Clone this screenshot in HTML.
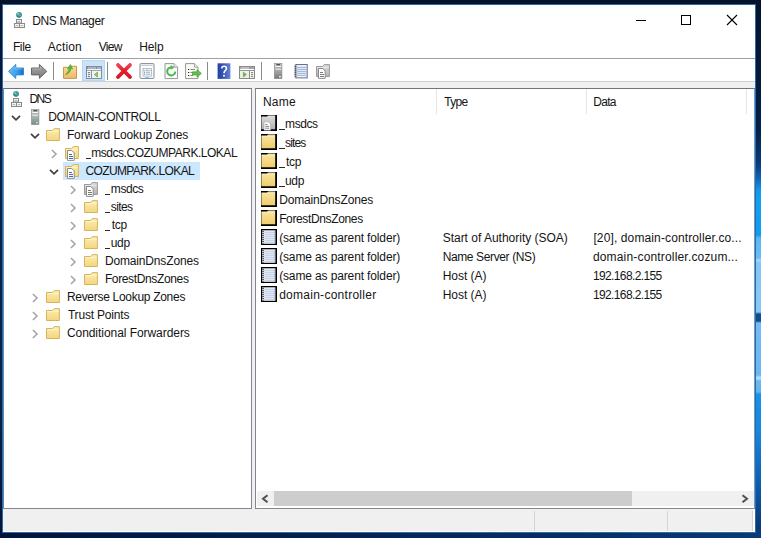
<!DOCTYPE html>
<html><head><meta charset="utf-8">
<style>
*{box-sizing:border-box;margin:0;padding:0}
html,body{width:761px;height:538px;overflow:hidden;background:#04193c;font-family:"Liberation Sans",sans-serif;font-size:12px;color:#000}
.a{position:absolute}
.t{position:absolute;white-space:nowrap;line-height:14px;font-size:12px;color:#141414}
svg{position:absolute;overflow:visible}
</style></head><body>
<!-- desktop wallpaper strips -->
<div class="a" style="left:0;top:0;width:761px;height:6px;background:#03132c"></div>
<div class="a" style="left:0;top:0;width:3px;height:538px;background:linear-gradient(#03132c 0,#04234a 120px,#04234a 400px,#03163a 538px)"></div>
<div class="a" style="left:0;top:532px;width:761px;height:6px;background:linear-gradient(to right,#03153a 0,#04204c 300px,#0a3a78 761px)"></div>
<div class="a" style="left:755px;top:0;width:6px;height:538px;background:linear-gradient(#03132c 0px,#04204a 130px,#0a3d7c 165px,#0f63b5 178px,#1497e8 190px,#10a0f2 200px,#0e9cf0 235px,#5ab8f4 238px,#6abdf4 258px,#a5d8f8 260px,#84c6f5 263px,#8cc8f4 312px,#0e4f8e 314px,#0e4f8e 321px,#74bcf1 323px,#6ab8f0 375px,#c0e2f8 378px,#6ab8f0 381px,#62b4ee 392px,#1a90e8 394px,#1488e0 430px,#1278d0 450px,#0d5cae 485px,#0a3a78 525px,#0a3a78 538px)"></div>
<!-- window -->
<div class="a" style="left:2px;top:4px;width:754px;height:529px;background:#2f6aa5"></div>
<div class="a" style="left:3px;top:5px;width:752px;height:527px;background:#fff"></div>
<!-- menu bottom line -->
<div class="a" style="left:3px;top:58px;width:752px;height:1px;background:#a0a0a0"></div>
<!-- toolbar bottom -->
<div class="a" style="left:3px;top:81px;width:752px;height:7px;background:#f0f0f0;border-top:1px solid #d0d0d0"></div>
<!-- main area bg -->
<div class="a" style="left:3px;top:88px;width:750px;height:421px;background:#f0f0f0"></div>
<!-- left pane -->
<div class="a" style="left:3px;top:88px;width:249px;height:421px;background:#fff;border:1px solid #828790;border-top-color:#747474;border-left-color:#5a8ab5"></div>
<!-- right pane -->
<div class="a" style="left:255px;top:88px;width:500px;height:421px;background:#fff;border:1px solid #828790;border-top-color:#747474;border-right-color:#6a9ccc"></div>
<!-- status bar -->
<div class="a" style="left:3px;top:509px;width:750px;height:22px;background:#f0f0f0"></div>
<div class="a" style="left:534px;top:511px;width:1px;height:20px;background:#d4d4d4"></div>
<div class="a" style="left:667px;top:511px;width:1px;height:20px;background:#d4d4d4"></div>
<div class="a" style="left:752px;top:511px;width:1px;height:20px;background:#d4d4d4"></div>
<!-- header separators -->
<div class="a" style="left:436px;top:89px;width:1px;height:25px;background:#e5e5e5"></div>
<div class="a" style="left:586px;top:89px;width:1px;height:25px;background:#e5e5e5"></div>
<div class="a" style="left:746px;top:89px;width:1px;height:25px;background:#e5e5e5"></div>
<!-- h scrollbar -->
<div class="a" style="left:257px;top:491px;width:497px;height:15px;background:#f0f0f0"></div>
<div class="a" style="left:274px;top:491px;width:358px;height:15px;background:#cdcdcd"></div>
<svg style="left:257px;top:491px" width="17" height="15"><path d="M10.5 4.2 L6 7.7 L10.5 11.2" fill="none" stroke="#505050" stroke-width="2"/></svg>
<svg style="left:737px;top:491px" width="17" height="15"><path d="M5.5 4.2 L10 7.7 L5.5 11.2" fill="none" stroke="#505050" stroke-width="2"/></svg>
<!-- selection -->
<div class="a" style="left:63px;top:162px;width:137px;height:18px;background:#cce8ff"></div>
<!-- toolbar highlight -->
<div class="a" style="left:82px;top:60px;width:23px;height:21px;background:#cce4f7;border:1px solid #b4d8f5"></div>
<!-- toolbar separators -->
<div class="a" style="left:53px;top:62px;width:1px;height:18px;background:#8a8a8a"></div><div class="a" style="left:107px;top:62px;width:1px;height:18px;background:#8a8a8a"></div><div class="a" style="left:207px;top:62px;width:1px;height:18px;background:#8a8a8a"></div><div class="a" style="left:261px;top:62px;width:1px;height:18px;background:#8a8a8a"></div>
<!-- window controls -->
<div class="a" style="left:636px;top:20px;width:10px;height:1px;background:#000"></div>
<div class="a" style="left:681px;top:15px;width:10px;height:10px;border:1px solid #000"></div>
<svg style="left:727px;top:15px" width="10" height="10"><path d="M0 0 L10 10 M10 0 L0 10" stroke="#000" stroke-width="1.1" fill="none"/></svg>
<svg width="0" height="0" style="position:absolute"><defs>
<linearGradient id="gF" x1="0" y1="0" x2="0" y2="1"><stop offset="0" stop-color="#fcedb4"/><stop offset="1" stop-color="#f3d680"/></linearGradient>
<linearGradient id="gFU" x1="0" y1="0" x2="0" y2="1"><stop offset="0" stop-color="#f8dc98"/><stop offset="1" stop-color="#eeb868"/></linearGradient>
<linearGradient id="gFL" x1="0" y1="0" x2="0" y2="1"><stop offset="0" stop-color="#f9e6a4"/><stop offset="1" stop-color="#f0cd6c"/></linearGradient>
<linearGradient id="gG" x1="0" y1="0" x2="0" y2="1"><stop offset="0" stop-color="#dcdcdc"/><stop offset="1" stop-color="#b4b4b4"/></linearGradient>
<linearGradient id="gS" x1="0" y1="0" x2="0" y2="1"><stop offset="0" stop-color="#d6dcda"/><stop offset="0.4" stop-color="#b2bcb8"/><stop offset="1" stop-color="#7a8884"/></linearGradient>
<linearGradient id="gS2" x1="0" y1="0" x2="0" y2="1"><stop offset="0" stop-color="#d8d8d8"/><stop offset="0.4" stop-color="#b0b0b0"/><stop offset="1" stop-color="#787878"/></linearGradient>
<linearGradient id="gB" x1="0" y1="0" x2="1" y2="0"><stop offset="0" stop-color="#5cbcf4"/><stop offset="0.55" stop-color="#3aa0ea"/><stop offset="1" stop-color="#1a6cc4"/></linearGradient>
<linearGradient id="gA" x1="0" y1="0" x2="0" y2="1"><stop offset="0" stop-color="#a6a6a6"/><stop offset="1" stop-color="#7e7e7e"/></linearGradient>
<linearGradient id="gH" x1="0" y1="0" x2="1" y2="0"><stop offset="0" stop-color="#2440a0"/><stop offset="0.5" stop-color="#3a58b8"/><stop offset="1" stop-color="#6a84d4"/></linearGradient>
<linearGradient id="gR" x1="0" y1="0" x2="0" y2="1"><stop offset="0" stop-color="#f06a70"/><stop offset="0.5" stop-color="#e01828"/><stop offset="1" stop-color="#c81020"/></linearGradient>
<radialGradient id="gT" cx="0.4" cy="0.35" r="0.7"><stop offset="0" stop-color="#6cbcc0"/><stop offset="1" stop-color="#0f6c70"/></radialGradient>

<g id="folder"><path d="M1.5 3.5H7.6L9.2 1.6H14.4V13.5H1.5Z" fill="url(#gF)" stroke="#d6b55a"/><path d="M2.2 4.6H13.8" stroke="#fdf4cf" stroke-width="0.9"/></g>
<g id="gfolder"><path d="M1.5 3.5H7.6L9.2 1.6H14.4V13.5H1.5Z" fill="url(#gG)" stroke="#9a9a9a"/><path d="M2.2 4.6H13.8" stroke="#ececec" stroke-width="0.9"/></g>
<g id="doc"><path d="M3.5 5.5H7.8L10.2 7.9V15.4H3.5Z" fill="#fff" stroke="#8c8c8c"/><path d="M5 9.5H8M5 11.5H9M5 13.5H9" stroke="#34589c" stroke-width="0.9"/></g>
<g id="gdoc"><path d="M3.5 5.5H7.8L10.2 7.9V15.4H3.5Z" fill="#fff" stroke="#8c8c8c"/><path d="M5 9.5H8M5 11.5H9M5 13.5H9" stroke="#777" stroke-width="1"/></g>
<g id="zone"><use href="#folder"/><use href="#doc"/></g>
<g id="gzone"><use href="#gfolder"/><use href="#gdoc"/></g>
<g id="server"><rect x="4.4" y="0.4" width="7.5" height="15.2" fill="url(#gS)" stroke="#8a9692" stroke-width="0.7"/><path d="M6.3 1.8H10.3" stroke="#1c1c1c" stroke-width="1"/><path d="M5.4 3.5H11" stroke="#fafafa" stroke-width="1.1"/><path d="M5.4 6.1H11" stroke="#f4f4f4" stroke-width="1.1"/><path d="M5.4 4.8H11" stroke="#98a4a0" stroke-width="0.8"/><rect x="9" y="13" width="1.8" height="1.4" fill="#b8eaa8"/></g>
<g id="tserver"><rect x="4.4" y="0.4" width="7.5" height="15.2" fill="url(#gS2)" stroke="#8c8c8c" stroke-width="0.7"/><path d="M6.3 1.8H10.3" stroke="#1c1c1c" stroke-width="1"/><path d="M5.4 3.5H11" stroke="#fafafa" stroke-width="1.1"/><path d="M5.4 6.1H11" stroke="#f4f4f4" stroke-width="1.1"/><path d="M5.4 4.8H11" stroke="#a0a0a0" stroke-width="0.8"/><rect x="9" y="13" width="1.8" height="1.4" fill="#f0f0f0"/></g>
<g id="dns"><circle cx="6" cy="2.8" r="2.9" fill="url(#gT)"/><path d="M4.8 1.5L5.6 2.5M7 3.3L7.5 4.3" stroke="#d8f4ee" stroke-width="0.9" opacity="0.85"/>
<rect x="3.5" y="7.5" width="5" height="3.5" fill="#f6f6f6" stroke="#8a8a8a" stroke-width="1"/>
<rect x="1.5" y="11.5" width="5" height="4" fill="#f6f6f6" stroke="#8a8a8a" stroke-width="1"/>
<rect x="6.5" y="11.5" width="5" height="4" fill="#f6f6f6" stroke="#8a8a8a" stroke-width="1"/>
<path d="M4.7 9.4H7.3M2.7 13.6H5.3M7.7 13.6H10.3" stroke="#a8a8a8" stroke-width="0.9"/></g>
<g id="chevD"><path d="M-4 -2.2L0 1.9L4 -2.2" fill="none" stroke="#404040" stroke-width="1.7"/></g>
<g id="chevR"><path d="M-2.1 -4L2 0L-2.1 4" fill="none" stroke="#a6a6a6" stroke-width="1.6"/></g>
<g id="note"><rect x="2.8" y="1.5" width="11.4" height="13.4" fill="#eef3fd" stroke="#56627e" stroke-width="0.9"/><path d="M4 4.3H13.4M4 6.3H13.4M4 8.3H13.4M4 10.3H13.4M4 12.3H13.4" stroke="#8fa6cc" stroke-width="0.9"/><path d="M1.3 3.2H3.4M1.3 5.2H3.4M1.3 7.2H3.4M1.3 9.2H3.4M1.3 11.2H3.4M1.3 13.2H3.4" stroke="#4a4a4a" stroke-width="1"/></g>
<g id="rec"><rect x="0" y="0" width="16" height="16" fill="#000"/><rect x="1.1" y="1.3" width="13.2" height="13.5" fill="#f6f9ff"/><path d="M3.6 3.2H14M3.6 5.2H14M3.6 7.2H14M3.6 9.2H14M3.6 11.2H14M3.6 13.2H14" stroke="#9db2d4" stroke-width="0.75"/><path d="M1.1 2.4H3.1M1.1 4.4H3.1M1.1 6.4H3.1M1.1 8.4H3.1M1.1 10.4H3.1M1.1 12.4H3.1M1.1 14.2H3.1" stroke="#5a5a5a" stroke-width="1.1"/><path d="M14 1.5V14.6" stroke="#8c9cc0" stroke-width="0.7"/></g>
<g id="lfolder"><rect x="0" y="0" width="16" height="16" fill="#000"/><path d="M0.4 1.6H6L7.3 0.5H14.2V14.2H0.4Z" fill="url(#gFL)"/><path d="M6.5 1.4H13.5" stroke="#e8d9a0" stroke-width="0.8"/><path d="M0.8 2.6H13.8" stroke="#fdf4cf" stroke-width="0.8" opacity="0.6"/></g>
<g id="lgzone"><rect x="0" y="0" width="16" height="16" fill="#000"/><path d="M0.4 1.6H6L7.3 0.5H14.2V14.2H0.4Z" fill="url(#gG)"/><path d="M6.5 1.4H13.5" stroke="#e4e4e4" stroke-width="0.8"/><path d="M3 6.8H7.4L9.6 9V15.2H3Z" fill="#fff" stroke="#a0a0a0" stroke-width="0.6"/><path d="M4.2 9.6H6.4M4.2 11.4H8.2M4.2 13.2H8.2" stroke="#7a7a7a" stroke-width="0.9"/></g>
</defs></svg>
<svg style="left:8px;top:63px" width="16" height="16"><path d="M0.6 8.4L7.8 1.4V5H15.5V11.9H7.8V15.4Z" fill="url(#gB)" stroke="#2b84d4" stroke-width="0.9" stroke-linejoin="round"/><path d="M2.2 8.2L7 3.6V6H14.5" fill="none" stroke="#9bd6f8" stroke-width="0.8" opacity="0.8"/></svg>
<svg style="left:31px;top:63px" width="16" height="16"><path d="M15.8 8.4L8.4 1.4V5H0.5V11.9H8.4V15.4Z" fill="url(#gA)" stroke="#5c5c5c" stroke-width="0.9" stroke-linejoin="round"/><path d="M1.4 6H9.3V3.6" fill="none" stroke="#c4c4c4" stroke-width="0.8" opacity="0.8"/></svg>
<svg style="left:62px;top:63px" width="16" height="16"><path d="M1.5 4.3H7L8.5 3.3H14.5V15.4H1.5Z" fill="url(#gFU)" stroke="#c49a50"/><path d="M3.6 11.6C5.5 10 6.5 8 7.3 5.6L5.6 5.8L8.4 1.6L10.6 6L8.9 5.4C8.6 8.5 6.5 10.8 3.6 11.6Z" fill="#58c040" stroke="#389a2c" stroke-width="0.6"/></svg>
<svg style="left:86px;top:63px" width="16" height="16"><rect x="0.5" y="3.5" width="15" height="12" fill="#fff" stroke="#78829a" stroke-width="0.9"/><rect x="1" y="4" width="14" height="2" fill="#8690a6"/><path d="M2 5H10" stroke="#e4e8ee" stroke-width="0.8"/><rect x="11.5" y="4.4" width="1.2" height="1.2" fill="#e4e8ee"/><rect x="13.3" y="4.4" width="1.2" height="1.2" fill="#e4e8ee"/><path d="M0.5 7.4H15.5" stroke="#78829a" stroke-width="0.8"/><path d="M5.5 7.5V15.5" stroke="#78829a" stroke-width="0.9"/><rect x="1.8" y="9" width="2.4" height="1.2" fill="#78829a"/><rect x="1.8" y="11" width="2.4" height="1.2" fill="#78829a"/><rect x="1.8" y="13" width="2.4" height="1.2" fill="#78829a"/><rect x="6.2" y="8.2" width="8.8" height="6.8" fill="#eef6e8"/><path d="M11.4 9.2L8.4 11.6L11.4 14Z" fill="#9ccc88" stroke="#5c9a48" stroke-width="0.7"/></svg>
<svg style="left:116px;top:63px" width="16" height="16"><path d="M2 2L14 14M14 2L2 14" stroke="url(#gR)" stroke-width="3.6" stroke-linecap="round"/><path d="M2 2L14 14M14 2L2 14" stroke="#e8202e" stroke-width="3.6" stroke-linecap="round" opacity="0.55"/></svg>
<svg style="left:138.5px;top:63px" width="16" height="16"><rect x="1" y="0.6" width="14" height="14.8" rx="1" fill="#fdfdfd" stroke="#848c94" stroke-width="1"/><path d="M2.2 2.4H13.8" stroke="#c4ccd4" stroke-width="1.2"/><rect x="4" y="5.5" width="8.4" height="7.6" fill="#fff" stroke="#a8b2be" stroke-width="0.8"/><path d="M4 7.4H12.4M8.2 5.5V7.4" stroke="#a8b2be" stroke-width="0.8"/><path d="M5.2 9.2H6.2M5.2 11.2H6.2" stroke="#3c5c8c" stroke-width="1"/><path d="M7.2 9.2H11.2M7.2 11.2H11.2" stroke="#8c9cb4" stroke-width="0.9"/><rect x="6.2" y="14.4" width="3.6" height="1.4" fill="#58a8cc"/></svg>
<svg style="left:162.5px;top:63px" width="16" height="16"><path d="M2 0.6H11L14.6 4.2V15.6H2Z" fill="#fbfbfb" stroke="#8a8a8a" stroke-width="0.9"/><path d="M11 0.6V4.2H14.6" fill="#e8e8e8" stroke="#8a8a8a" stroke-width="0.7"/><path d="M8.2 4.4A4 4 0 1 0 12.2 8.6" fill="none" stroke="#4cb648" stroke-width="2"/><path d="M7.8 2L11.4 4.4L7.8 6.8Z" fill="#4cb648"/></svg>
<svg style="left:185px;top:63px" width="17" height="16"><path d="M0.6 0.6H9.4L13 4.2V15.6H0.6Z" fill="#fbfaf4" stroke="#8a8a8a" stroke-width="0.9"/><path d="M9.4 0.6V4.2H13" fill="#e8e8e8" stroke="#8a8a8a" stroke-width="0.7"/><path d="M3 6.5H4.2M3 9.5H4.2M3 12.5H4.2" stroke="#222" stroke-width="1.2"/><path d="M5.5 6.5H10M5.5 9.5H8M5.5 12.5H8" stroke="#888" stroke-width="1"/><path d="M7.5 8.8H12V6.6L16.4 10.4L12 14.2V12H7.5Z" fill="#5cc04a" stroke="#3a9a30" stroke-width="0.6"/></svg>
<svg style="left:215.5px;top:63px" width="16" height="16"><rect x="1.6" y="0.3" width="12.8" height="15.6" fill="url(#gH)"/><path d="M5.8 5.4C5.8 2.6 10.4 2.6 10.4 5.4C10.4 7.4 8 7.6 8 10.2" fill="none" stroke="#fff" stroke-width="1.6"/><circle cx="8" cy="12.7" r="1" fill="#fff"/></svg>
<svg style="left:239px;top:63px" width="16" height="16"><rect x="0.5" y="3.5" width="15" height="12" fill="#fff" stroke="#8a8a8a"/><rect x="1" y="4" width="14" height="2" fill="#a4a4a4"/><path d="M2 5H10" stroke="#ececec" stroke-width="0.8"/><path d="M0.5 7.5H15.5" stroke="#8a8a8a" stroke-width="0.9"/><path d="M10.5 7.5V15.5" stroke="#8a8a8a"/><rect x="11.9" y="9" width="2.4" height="1.2" fill="#8a8a8a"/><rect x="11.9" y="11" width="2.4" height="1.2" fill="#8a8a8a"/><rect x="11.9" y="13" width="2.4" height="1.2" fill="#8a8a8a"/><rect x="1" y="8.2" width="9" height="6.8" fill="#e8f2de"/><path d="M4.4 9.2L7.4 11.6L4.4 14Z" fill="#78b058" stroke="#5a9040" stroke-width="0.5"/></svg>
<svg style="left:270px;top:63px" width="16" height="16"><use href="#tserver"/></svg>
<svg style="left:293px;top:63.3px" width="16" height="16"><use href="#note"/></svg>
<svg style="left:315px;top:63px" width="16" height="16"><use href="#gzone"/></svg>
<svg style="left:10px;top:91px" width="13" height="16"><use href="#dns"/></svg>
<svg style="left:13px;top:12px" width="13" height="16"><use href="#dns"/></svg>
<svg style="left:15.6px;top:117.9px" width="1" height="1"><use href="#chevD"/></svg>
<svg style="left:26.9px;top:109px" width="16" height="16"><use href="#server"/></svg>
<svg style="left:34.6px;top:135.9px" width="1" height="1"><use href="#chevD"/></svg>
<svg style="left:45.1px;top:127px" width="16" height="16"><use href="#folder"/></svg>
<svg style="left:53.6px;top:153.9px" width="1" height="1"><use href="#chevR"/></svg>
<svg style="left:64.1px;top:145px" width="16" height="16"><use href="#zone"/></svg>
<svg style="left:53.6px;top:171.9px" width="1" height="1"><use href="#chevD"/></svg>
<svg style="left:64.1px;top:163px" width="16" height="16"><use href="#zone"/></svg>
<svg style="left:72.6px;top:189.9px" width="1" height="1"><use href="#chevR"/></svg>
<svg style="left:83.1px;top:181px" width="16" height="16"><use href="#gzone"/></svg>
<svg style="left:72.6px;top:207.9px" width="1" height="1"><use href="#chevR"/></svg>
<svg style="left:83.1px;top:199px" width="16" height="16"><use href="#folder"/></svg>
<svg style="left:72.6px;top:225.9px" width="1" height="1"><use href="#chevR"/></svg>
<svg style="left:83.1px;top:217px" width="16" height="16"><use href="#folder"/></svg>
<svg style="left:72.6px;top:243.9px" width="1" height="1"><use href="#chevR"/></svg>
<svg style="left:83.1px;top:235px" width="16" height="16"><use href="#folder"/></svg>
<svg style="left:72.6px;top:261.9px" width="1" height="1"><use href="#chevR"/></svg>
<svg style="left:83.1px;top:253px" width="16" height="16"><use href="#folder"/></svg>
<svg style="left:72.6px;top:279.9px" width="1" height="1"><use href="#chevR"/></svg>
<svg style="left:83.1px;top:271px" width="16" height="16"><use href="#folder"/></svg>
<svg style="left:34.6px;top:297.9px" width="1" height="1"><use href="#chevR"/></svg>
<svg style="left:45.1px;top:289px" width="16" height="16"><use href="#folder"/></svg>
<svg style="left:34.6px;top:315.9px" width="1" height="1"><use href="#chevR"/></svg>
<svg style="left:45.1px;top:307px" width="16" height="16"><use href="#folder"/></svg>
<svg style="left:34.6px;top:333.9px" width="1" height="1"><use href="#chevR"/></svg>
<svg style="left:45.1px;top:325px" width="16" height="16"><use href="#folder"/></svg>
<svg style="left:261px;top:115px" width="16" height="16"><use href="#lgzone"/></svg>
<svg style="left:261px;top:134px" width="16" height="16"><use href="#lfolder"/></svg>
<svg style="left:261px;top:153px" width="16" height="16"><use href="#lfolder"/></svg>
<svg style="left:261px;top:172px" width="16" height="16"><use href="#lfolder"/></svg>
<svg style="left:261px;top:191px" width="16" height="16"><use href="#lfolder"/></svg>
<svg style="left:261px;top:210px" width="16" height="16"><use href="#lfolder"/></svg>
<svg style="left:261px;top:229px" width="16" height="16"><use href="#rec"/></svg>
<svg style="left:261px;top:248px" width="16" height="16"><use href="#rec"/></svg>
<svg style="left:261px;top:267px" width="16" height="16"><use href="#rec"/></svg>
<svg style="left:261px;top:286px" width="16" height="16"><use href="#rec"/></svg>
<span class="t" id="t0" style="left:32.15px;top:14.09px;letter-spacing:-0.342px">DNS Manager</span>
<span class="t" id="t1" style="left:12.90px;top:39.84px;letter-spacing:-0.360px">File</span>
<span class="t" id="t2" style="left:47.65px;top:39.84px;letter-spacing:0.144px">Action</span>
<span class="t" id="t3" style="left:98.65px;top:39.84px;letter-spacing:-0.660px">View</span>
<span class="t" id="t4" style="left:139.15px;top:39.84px;letter-spacing:-0.060px">Help</span>
<span class="t" id="t5" style="left:29.40px;top:91.64px;letter-spacing:-1.440px">DNS</span>
<span class="t" id="t6" style="left:48.15px;top:109.64px;letter-spacing:-0.334px">DOMAIN-CONTROLL</span>
<span class="t" id="t7" style="left:66.90px;top:127.64px;letter-spacing:-0.104px">Forward Lookup Zones</span>
<div class="a" style="left:85.60px;top:157.80px;width:5.3px;height:1px;background:#2a2a2a"></div>
<span class="t" id="t8" style="left:91.30px;top:145.64px;letter-spacing:-0.477px">msdcs.COZUMPARK.LOKAL</span>
<span class="t" id="t9" style="left:85.40px;top:163.64px;letter-spacing:-0.604px">COZUMPARK.LOKAL</span>
<div class="a" style="left:105.10px;top:193.80px;width:5.3px;height:1px;background:#2a2a2a"></div>
<span class="t" id="t10" style="left:110.80px;top:181.64px;letter-spacing:-0.405px">msdcs</span>
<div class="a" style="left:105.10px;top:211.80px;width:5.3px;height:1px;background:#2a2a2a"></div>
<span class="t" id="t11" style="left:110.80px;top:199.64px;letter-spacing:-0.630px">sites</span>
<div class="a" style="left:105.10px;top:229.80px;width:5.3px;height:1px;background:#2a2a2a"></div>
<span class="t" id="t12" style="left:111.80px;top:217.64px;letter-spacing:-0.360px">tcp</span>
<div class="a" style="left:105.10px;top:247.80px;width:5.3px;height:1px;background:#2a2a2a"></div>
<span class="t" id="t13" style="left:110.80px;top:235.64px;letter-spacing:-0.360px">udp</span>
<span class="t" id="t14" style="left:104.90px;top:253.64px;letter-spacing:-0.152px">DomainDnsZones</span>
<span class="t" id="t15" style="left:104.90px;top:271.64px;letter-spacing:-0.360px">ForestDnsZones</span>
<span class="t" id="t16" style="left:66.90px;top:289.64px;letter-spacing:-0.294px">Reverse Lookup Zones</span>
<span class="t" id="t17" style="left:67.90px;top:307.64px;letter-spacing:-0.180px">Trust Points</span>
<span class="t" id="t18" style="left:66.90px;top:325.64px;letter-spacing:-0.051px">Conditional Forwarders</span>
<span class="t" id="t19" style="left:262.90px;top:95.24px;letter-spacing:0.240px">Name</span>
<span class="t" id="t20" style="left:444.15px;top:95.24px;letter-spacing:-0.660px">Type</span>
<span class="t" id="t21" style="left:593.15px;top:95.24px;letter-spacing:-0.660px">Data</span>
<div class="a" style="left:279.35px;top:129.00px;width:5.3px;height:1px;background:#2a2a2a"></div>
<span class="t" id="t22" style="left:285.05px;top:116.84px;letter-spacing:-0.405px">msdcs</span>
<div class="a" style="left:279.35px;top:148.00px;width:5.3px;height:1px;background:#2a2a2a"></div>
<span class="t" id="t23" style="left:285.05px;top:135.84px;letter-spacing:-0.855px">sites</span>
<div class="a" style="left:279.35px;top:167.00px;width:5.3px;height:1px;background:#2a2a2a"></div>
<span class="t" id="t24" style="left:286.05px;top:154.84px;letter-spacing:-0.360px">tcp</span>
<div class="a" style="left:279.35px;top:186.00px;width:5.3px;height:1px;background:#2a2a2a"></div>
<span class="t" id="t25" style="left:285.05px;top:173.84px;letter-spacing:-0.360px">udp</span>
<span class="t" id="t26" style="left:279.15px;top:192.84px;letter-spacing:-0.152px">DomainDnsZones</span>
<span class="t" id="t27" style="left:279.15px;top:211.84px;letter-spacing:-0.360px">ForestDnsZones</span>
<span class="t" id="t28" style="left:279.15px;top:230.84px;letter-spacing:-0.131px">(same as parent folder)</span>
<span class="t" id="t29" style="left:279.15px;top:249.84px;letter-spacing:-0.131px">(same as parent folder)</span>
<span class="t" id="t30" style="left:279.15px;top:268.84px;letter-spacing:-0.131px">(same as parent folder)</span>
<span class="t" id="t31" style="left:279.15px;top:287.84px;letter-spacing:0.270px">domain-controller</span>
<span class="t" id="t32" style="left:442.65px;top:230.84px;letter-spacing:-0.008px">Start of Authority (SOA)</span>
<span class="t" id="t33" style="left:442.65px;top:249.84px;letter-spacing:-0.372px">Name Server (NS)</span>
<span class="t" id="t34" style="left:442.65px;top:268.84px;letter-spacing:-0.026px">Host (A)</span>
<span class="t" id="t35" style="left:442.65px;top:287.84px;letter-spacing:-0.026px">Host (A)</span>
<span class="t" id="t36" style="left:593.40px;top:230.84px;letter-spacing:0.122px">[20], domain-controller.co...</span>
<span class="t" id="t37" style="left:592.90px;top:249.84px;letter-spacing:0.173px">domain-controller.cozum...</span>
<span class="t" id="t38" style="left:592.90px;top:268.84px;letter-spacing:-0.615px">192.168.2.155</span>
<span class="t" id="t39" style="left:592.90px;top:287.84px;letter-spacing:-0.615px">192.168.2.155</span>
</body></html>
